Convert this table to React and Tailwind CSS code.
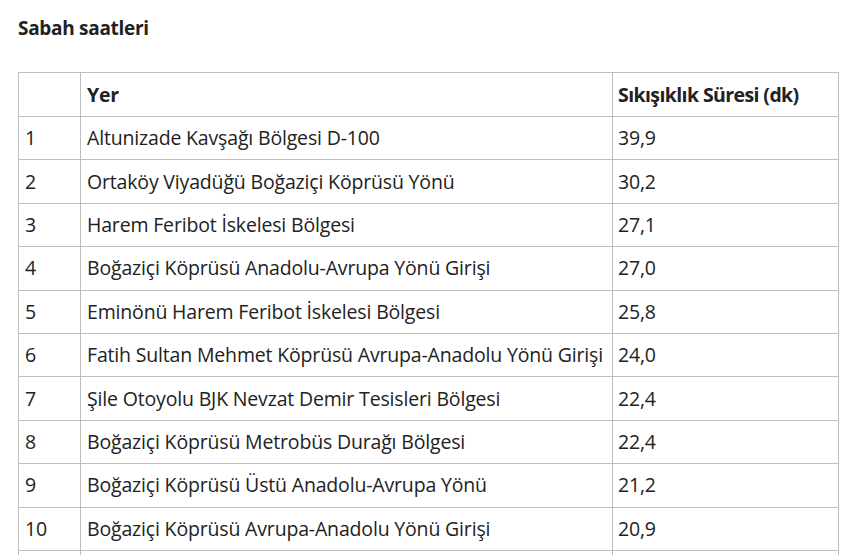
const rows = [
  ['1', 'Altunizade Kavşağı Bölgesi D-100', '39,9'],
  ['2', 'Ortaköy Viyadüğü Boğaziçi Köprüsü Yönü', '30,2'],
  ['3', 'Harem Feribot İskelesi Bölgesi', '27,1'],
  ['4', 'Boğaziçi Köprüsü Anadolu-Avrupa Yönü Girişi', '27,0'],
  ['5', 'Eminönü Harem Feribot İskelesi Bölgesi', '25,8'],
  ['6', 'Fatih Sultan Mehmet Köprüsü Avrupa-Anadolu Yönü Girişi', '24,0'],
  ['7', 'Şile Otoyolu BJK Nevzat Demir Tesisleri Bölgesi', '22,4'],
  ['8', 'Boğaziçi Köprüsü Metrobüs Durağı Bölgesi', '22,4'],
  ['9', 'Boğaziçi Köprüsü Üstü Anadolu-Avrupa Yönü', '21,2'],
  ['10', 'Boğaziçi Köprüsü Avrupa-Anadolu Yönü Girişi', '20,9'],
];

const App = () => {
  return (
    <div className="h-[555px] w-[856px] overflow-hidden bg-white pl-[18px] pt-[15px] font-['Open_Sans',sans-serif] text-[#222]">
      <h3 className="text-[19px] font-bold leading-[26px] tracking-[-0.3px]">Sabah saatleri</h3>

      {/* Table */}
      <table className="mt-[31px] border-collapse text-[19.5px] leading-[26px] tracking-[-0.17px]">
        <thead>
          <tr className="h-[44px]">
            <th className="w-[62px] border border-[#bdbdbd]"></th>
            <th className="w-[532px] border border-[#bdbdbd] px-[6px] text-left font-bold">Yer</th>
            <th className="w-[226px] border border-[#bdbdbd] px-[5px] text-left font-bold tracking-[-0.6px]">Sıkışıklık Süresi (dk)</th>
          </tr>
        </thead>
        <tbody>
          {rows.map((r) => (
            <tr key={r[0]} className="h-[43.4px]">
              <td className="border border-[#bdbdbd] px-[6px]">{r[0]}</td>
              <td className="whitespace-nowrap border border-[#bdbdbd] px-[6px]">{r[1]}</td>
              <td className="border border-[#bdbdbd] px-[5px]">{r[2]}</td>
            </tr>
          ))}
          <tr className="h-[43.4px]">
            <td className="border border-[#bdbdbd]"></td>
            <td className="border border-[#bdbdbd]"></td>
            <td className="border border-[#bdbdbd]"></td>
          </tr>
        </tbody>
      </table>
    </div>
  );
};

export default App;
